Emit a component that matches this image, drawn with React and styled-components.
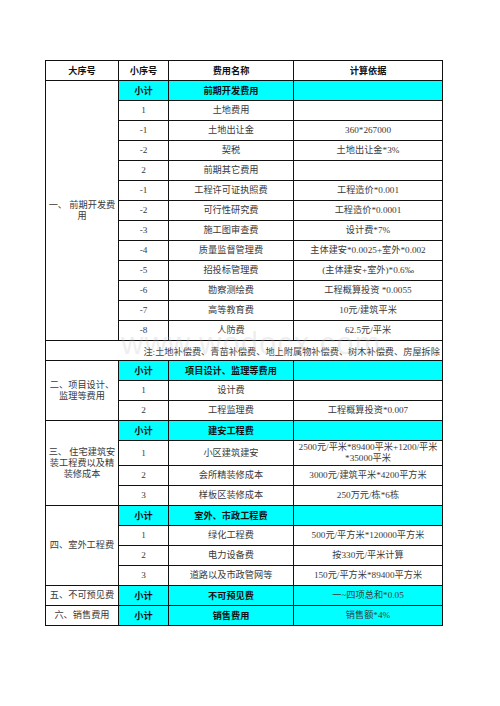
import React from 'react';
import styled, { createGlobalStyle } from 'styled-components';

const GlobalStyle = createGlobalStyle`
  html, body {
    margin: 0;
    padding: 0;
    background: #fff;
  }
  body {
    font-family: "Liberation Serif", "Noto Sans CJK SC", serif;
  }
`;

const Page = styled.div`
  padding: 60px 0 0 45px;
`;

const Sheet = styled.div`
  position: relative;
  width: 397px;
`;

const Table = styled.table`
  border-collapse: collapse;
  table-layout: fixed;
  width: 397px;
  font-size: 9.2px;
  color: #333;
`;

const Row = styled.tr`
  height: ${p => (p.$tall ? 25 : 20)}px;
`;

const Cell = styled.td`
  border: 1px solid #111;
  padding: 0 1px;
  text-align: center;
  vertical-align: middle;
  line-height: 11px;
  background: ${p => (p.$sub ? '#00ffff' : '#fff')};
  font-family: ${p => (p.$bold ? '"Noto Sans CJK SC", sans-serif' : 'inherit')};
  font-weight: ${p => (p.$bold ? 700 : 400)};
  color: ${p => (p.$bold ? '#111' : '#3a3a3a')};
`;

const NoteCell = styled.td`
  border: 1px solid #111;
  padding: 0 2px 0 0;
  text-align: right;
  white-space: nowrap;
  overflow: hidden;
  color: #3a3a3a;
`;

const Watermark = styled.div`
  position: absolute;
  left: 76px;
  top: 268px;
  font-family: "Liberation Sans", sans-serif;
  font-size: 31px;
  line-height: 1;
  letter-spacing: 1px;
  color: rgba(190, 190, 190, 0.25);
  pointer-events: none;
`;

const sections = [
  {
    label: '一、 前期开发费用',
    rows: [
      { no: '小计', name: '前期开发费用', basis: '', sub: true },
      { no: '1', name: '土地费用', basis: '' },
      { no: '-1', name: '土地出让金', basis: '360*267000' },
      { no: '-2', name: '契税', basis: '土地出让金*3%' },
      { no: '2', name: '前期其它费用', basis: '' },
      { no: '-1', name: '工程许可证执照费', basis: '工程造价*0.001' },
      { no: '-2', name: '可行性研究费', basis: '工程造价*0.0001' },
      { no: '-3', name: '施工图审查费', basis: '设计费*7%' },
      { no: '-4', name: '质量监督管理费', basis: '主体建安*0.0025+室外*0.002' },
      { no: '-5', name: '招投标管理费', basis: '(主体建安+室外)*0.6‰' },
      { no: '-6', name: '勘察测绘费', basis: '工程概算投资 *0.0055' },
      { no: '-7', name: '高等教育费', basis: '10元/建筑平米' },
      { no: '-8', name: '人防费', basis: '62.5元/平米' },
    ],
    note: '注:土地补偿费、青苗补偿费、地上附属物补偿费、树木补偿费、房屋拆除',
  },
  {
    label: '二、项目设计、监理等费用',
    rows: [
      { no: '小计', name: '项目设计、监理等费用', basis: '', sub: true },
      { no: '1', name: '设计费', basis: '' },
      { no: '2', name: '工程监理费', basis: '工程概算投资*0.007' },
    ],
  },
  {
    label: '三、 住宅建筑安装工程费以及精装修成本',
    rows: [
      { no: '小计', name: '建安工程费', basis: '', sub: true },
      { no: '1', name: '小区建筑建安', basis: '2500元/平米*89400平米+1200/平米*35000平米', tall: true },
      { no: '2', name: '会所精装修成本', basis: '3000元/建筑平米*4200平方米' },
      { no: '3', name: '样板区装修成本', basis: '250万元/栋*6栋' },
    ],
  },
  {
    label: '四、室外工程费',
    rows: [
      { no: '小计', name: '室外、市政工程费', basis: '', sub: true },
      { no: '1', name: '绿化工程费', basis: '500元/平方米*120000平方米' },
      { no: '2', name: '电力设备费', basis: '按330元/平米计算' },
      { no: '3', name: '道路以及市政管网等', basis: '150元/平方米*89400平方米' },
    ],
  },
  {
    label: '五、不可预见费',
    rows: [{ no: '小计', name: '不可预见费', basis: '一~四项总和*0.05', sub: true }],
  },
  {
    label: '六、销售费用',
    rows: [{ no: '小计', name: '销售费用', basis: '销售额*4%', sub: true }],
  },
];

export default function App() {
  return (
    <Page>
      <GlobalStyle />
      <Sheet>
        <Table>
          <colgroup>
            <col style={{ width: 73 }} />
            <col style={{ width: 50 }} />
            <col style={{ width: 125 }} />
            <col style={{ width: 149 }} />
          </colgroup>
          <tbody>
            <Row>
              <Cell $bold>大序号</Cell>
              <Cell $bold>小序号</Cell>
              <Cell $bold>费用名称</Cell>
              <Cell $bold>计算依据</Cell>
            </Row>
            {sections.map(section => (
              <React.Fragment key={section.label}>
                {section.rows.map((r, i) => (
                  <Row key={i} $tall={r.tall}>
                    {i === 0 && <Cell rowSpan={section.rows.length}>{section.label}</Cell>}
                    <Cell $sub={r.sub} $bold={r.sub}>{r.no}</Cell>
                    <Cell $sub={r.sub} $bold={r.sub}>{r.name}</Cell>
                    <Cell $sub={r.sub}>{r.basis}</Cell>
                  </Row>
                ))}
                {section.note && (
                  <Row>
                    <NoteCell colSpan={4}>{section.note}</NoteCell>
                  </Row>
                )}
              </React.Fragment>
            ))}
          </tbody>
        </Table>
        <Watermark>www.wodocx.com</Watermark>
      </Sheet>
    </Page>
  );
}
